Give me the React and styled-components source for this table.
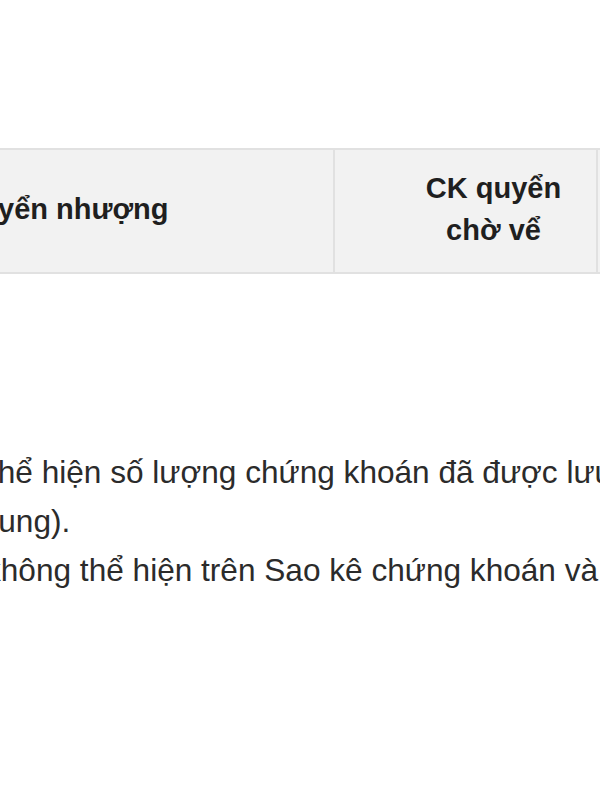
import React from 'react';
import styled, { createGlobalStyle } from 'styled-components';

const GlobalStyle = createGlobalStyle`
  html, body {
    margin: 0;
    padding: 0;
    background: #ffffff;
  }
  body {
    font-family: "Liberation Sans", Arial, sans-serif;
    color: #222;
  }
`;

const Viewport = styled.div`
  width: 600px;
  height: 800px;
  overflow: hidden;
`;

const Sheet = styled.div`
  margin-left: -220px;
  width: 1200px;
  padding-top: 148px;
`;

const Table = styled.table`
  border-collapse: collapse;
  table-layout: fixed;
  width: 1100px;
`;

const HeadCell = styled.th`
  box-sizing: border-box;
  width: ${(p) => p.$width}px;
  height: 124px;
  padding: 0 ${(p) => p.$right || 12}px 4px ${(p) => p.$left || 12}px;
  background: #f2f2f2;
  border: 2px solid #e1e1e1;
  font-size: 29px;
  line-height: 42px;
  font-weight: 700;
  color: #1f1f1f;
  text-align: center;
  vertical-align: middle;
`;

const Notes = styled.div`
  margin-top: 174px;
  font-size: 31.6px;
  line-height: 49px;
  color: #2b2b2b;
`;

const Line = styled.div`
  white-space: nowrap;
  text-indent: ${(p) => p.$indent}px;
`;

export default function App() {
  return (
    <>
      <GlobalStyle />
      <Viewport>
        <Sheet>
          <Table>
            <thead>
              <tr>
                <HeadCell $width={553}>chuyển nhượng</HeadCell>
                <HeadCell $width={263} $left={70} $right={14}>
                  CK quyê&#x309;n chờ vê&#x309;
                </HeadCell>
                <HeadCell $width={284}>CK chờ giao</HeadCell>
              </tr>
            </thead>
          </Table>
          <Notes>
            <Line $indent={209}>thể hiện số lượng chứng khoán đã được lưu ký tại</Line>
            <Line $indent={199}>trung).</Line>
            <Line $indent={205}>không thể hiện trên Sao kê chứng khoán và</Line>
          </Notes>
        </Sheet>
      </Viewport>
    </>
  );
}
